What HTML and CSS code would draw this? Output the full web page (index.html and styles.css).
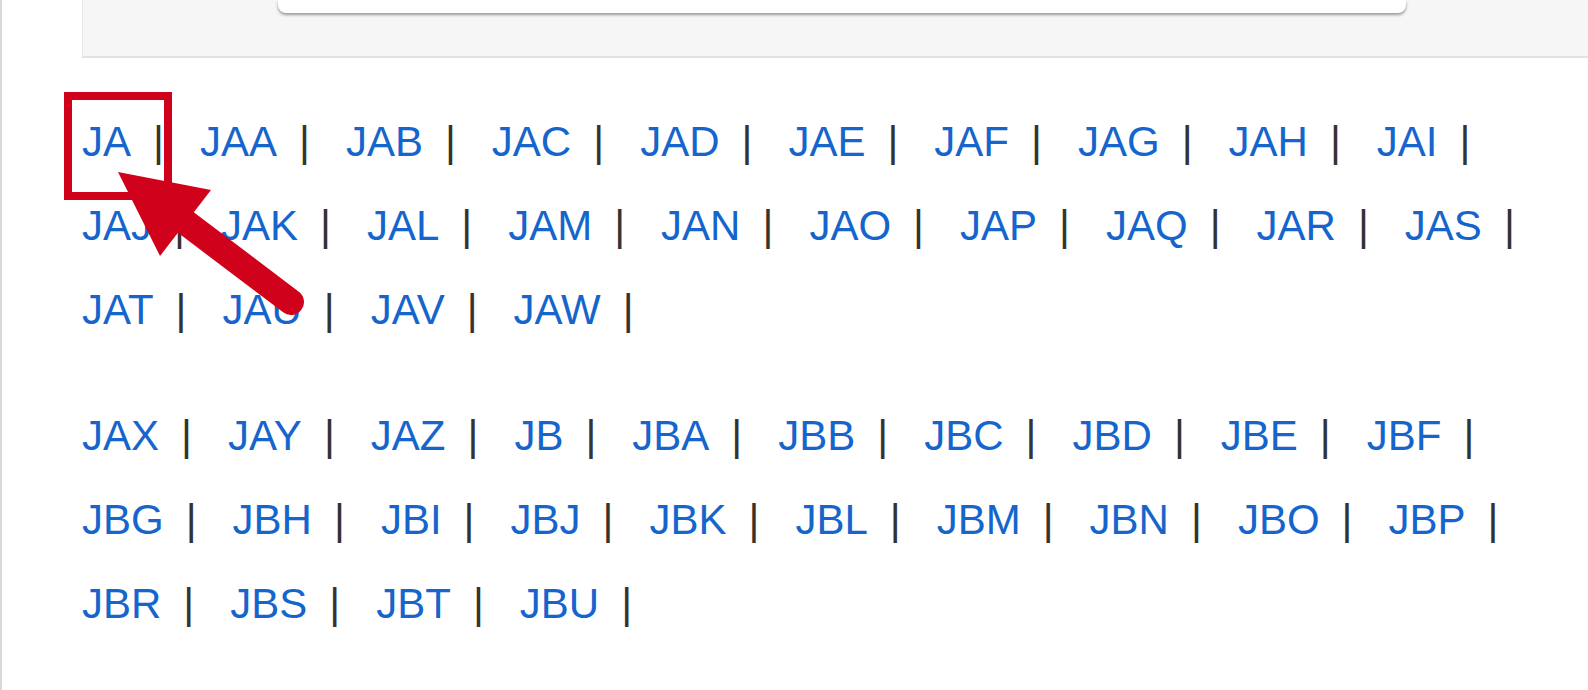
FILE: index.html
```html
<!DOCTYPE html>
<html lang="en">
<head>
    <meta charset="UTF-8">
    <meta name="viewport" content="width=device-width, initial-scale=1.0">
    <title>Index JA - JBU</title>
    <link rel="stylesheet" href="styles.css">
</head>
<body>
    <div class="page">
        <!-- search panel, cut off at the top -->
        <div class="search-panel">
            <div class="search-box"></div>
        </div>

        <div class="index">
            <div class="item"><a href="#">JA</a><span class="sep">|</span></div>
            <div class="item"><a href="#">JAA</a><span class="sep">|</span></div>
            <div class="item"><a href="#">JAB</a><span class="sep">|</span></div>
            <div class="item"><a href="#">JAC</a><span class="sep">|</span></div>
            <div class="item"><a href="#">JAD</a><span class="sep">|</span></div>
            <div class="item"><a href="#">JAE</a><span class="sep">|</span></div>
            <div class="item"><a href="#">JAF</a><span class="sep">|</span></div>
            <div class="item"><a href="#">JAG</a><span class="sep">|</span></div>
            <div class="item"><a href="#">JAH</a><span class="sep">|</span></div>
            <div class="item"><a href="#">JAI</a><span class="sep">|</span></div>
            <div class="item"><a href="#">JAJ</a><span class="sep">|</span></div>
            <div class="item"><a href="#">JAK</a><span class="sep">|</span></div>
            <div class="item"><a href="#">JAL</a><span class="sep">|</span></div>
            <div class="item"><a href="#">JAM</a><span class="sep">|</span></div>
            <div class="item"><a href="#">JAN</a><span class="sep">|</span></div>
            <div class="item"><a href="#">JAO</a><span class="sep">|</span></div>
            <div class="item"><a href="#">JAP</a><span class="sep">|</span></div>
            <div class="item"><a href="#">JAQ</a><span class="sep">|</span></div>
            <div class="item"><a href="#">JAR</a><span class="sep">|</span></div>
            <div class="item"><a href="#">JAS</a><span class="sep">|</span></div>
            <div class="item"><a href="#">JAT</a><span class="sep">|</span></div>
            <div class="item"><a href="#">JAU</a><span class="sep">|</span></div>
            <div class="item"><a href="#">JAV</a><span class="sep">|</span></div>
            <div class="item"><a href="#">JAW</a><span class="sep">|</span></div>
        </div>

        <div class="index">
            <div class="item"><a href="#">JAX</a><span class="sep">|</span></div>
            <div class="item"><a href="#">JAY</a><span class="sep">|</span></div>
            <div class="item"><a href="#">JAZ</a><span class="sep">|</span></div>
            <div class="item"><a href="#">JB</a><span class="sep">|</span></div>
            <div class="item"><a href="#">JBA</a><span class="sep">|</span></div>
            <div class="item"><a href="#">JBB</a><span class="sep">|</span></div>
            <div class="item"><a href="#">JBC</a><span class="sep">|</span></div>
            <div class="item"><a href="#">JBD</a><span class="sep">|</span></div>
            <div class="item"><a href="#">JBE</a><span class="sep">|</span></div>
            <div class="item"><a href="#">JBF</a><span class="sep">|</span></div>
            <div class="item"><a href="#">JBG</a><span class="sep">|</span></div>
            <div class="item"><a href="#">JBH</a><span class="sep">|</span></div>
            <div class="item"><a href="#">JBI</a><span class="sep">|</span></div>
            <div class="item"><a href="#">JBJ</a><span class="sep">|</span></div>
            <div class="item"><a href="#">JBK</a><span class="sep">|</span></div>
            <div class="item"><a href="#">JBL</a><span class="sep">|</span></div>
            <div class="item"><a href="#">JBM</a><span class="sep">|</span></div>
            <div class="item"><a href="#">JBN</a><span class="sep">|</span></div>
            <div class="item"><a href="#">JBO</a><span class="sep">|</span></div>
            <div class="item"><a href="#">JBP</a><span class="sep">|</span></div>
            <div class="item"><a href="#">JBR</a><span class="sep">|</span></div>
            <div class="item"><a href="#">JBS</a><span class="sep">|</span></div>
            <div class="item"><a href="#">JBT</a><span class="sep">|</span></div>
            <div class="item"><a href="#">JBU</a><span class="sep">|</span></div>
        </div>

        <!-- annotation: highlight box + arrow -->
        <div class="highlight"></div>
        <svg class="arrow" width="320" height="330" viewBox="0 0 320 330">
            <line x1="172" y1="212" x2="291" y2="302" stroke="#d0021b" stroke-width="26" stroke-linecap="round"/>
            <polygon points="118,172 211,190 160,256" fill="#d0021b"/>
        </svg>
    </div>
</body>
</html>
```

FILE: styles.css
```css
/* General Reset */
* {
    margin: 0;
    padding: 0;
    box-sizing: border-box;
}

body {
    font-family: "Liberation Sans", Arial, sans-serif;
    background-color: #fff;
    color: #333;
    overflow: hidden;
}

.page {
    position: relative;
    min-height: 690px;
    border-left: 2px solid #d9d9d9;
    padding-left: 80px;
}

.search-panel {
    height: 58px;
    background-color: #f6f6f6;
    border-left: 1px solid #e6e6e6;
    border-bottom: 2px solid #e2e2e2;
    padding-left: 195px;
    padding-right: 182px;
}

.search-box {
    height: 13px;
    background-color: #fff;
    border-radius: 0 0 8px 8px;
    box-shadow: 0 2px 3px rgba(0, 0, 0, 0.38);
}

.index {
    display: flex;
    flex-wrap: wrap;
    margin-top: 42px;
    font-size: 42px;
    line-height: 84px;
}

.item {
    display: flex;
}

.item a {
    color: #1565cc;
    text-decoration: none;
}

.item a:hover {
    text-decoration: underline;
}

.sep {
    color: #333;
    margin: 0 36px 0 22px;
}

.highlight {
    position: absolute;
    left: 62px;
    top: 92px;
    width: 108px;
    height: 108px;
    border: 8px solid #d0021b;
}

.arrow {
    position: absolute;
    left: -2px;
    top: 0;
}
```
